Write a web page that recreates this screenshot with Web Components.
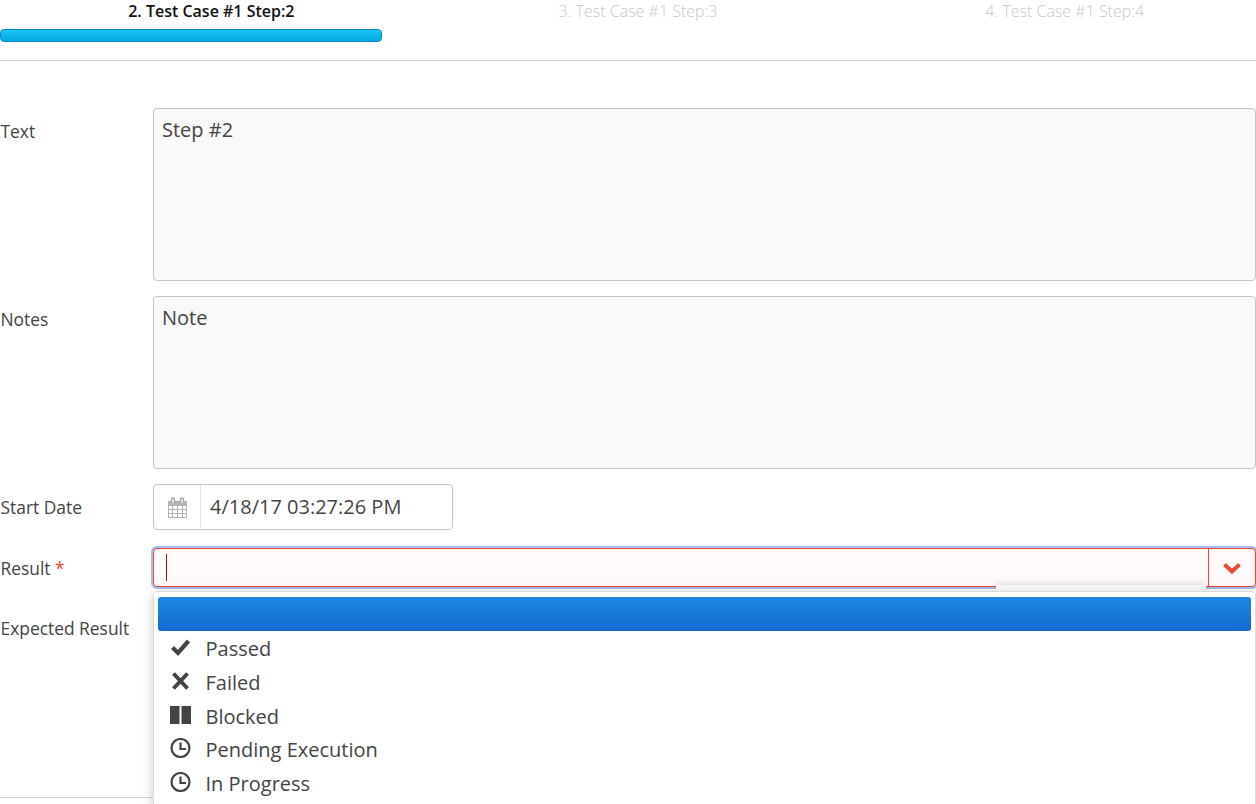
<!DOCTYPE html>
<html>
<head>
<meta charset="utf-8">
<title>Test Case Step</title>
<style>
    html, body{
        margin: 0;
        height: 804px;
        overflow: hidden;
        background-color: #fff;
        font-family: "Open Sans", sans-serif;
        color: #444;
    }
</style>
</head>
<body>
<step-header></step-header>
<form-row label="Text"><text-box>Step #2</text-box></form-row>
<form-row label="Notes"><text-box>Note</text-box></form-row>
<form-row label="Start Date"><date-field value="4/18/17 03:27:26 PM"></date-field></form-row>
<form-row label="Result" required style="--label-top:10px"><result-select></result-select></form-row>
<form-row label="Expected Result" last style="--label-top:15px"></form-row>

<script>
class StepHeader extends HTMLElement {
    constructor(){
        super();
        this.attachShadow({mode:'open'});
        this.shadowRoot.innerHTML = `
            <style>
                :host{
                    display: block;
                    height: 60px;
                    border-bottom: 1px solid #d4d4d4;
                    margin-bottom: 47px;
                }
                .steps{
                    display: grid;
                    grid-template-columns: repeat(3, 426.7px);
                    margin-left: -2px;
                }
                .step{
                    font-size: 16px;
                    line-height: 22px;
                    text-align: center;
                    font-weight: 300;
                    color: #c8c8c8;
                }
                .active{
                    color: #111;
                    font-weight: 600;
                }
                .bar{
                    width: 382px;
                    height: 13px;
                    margin-top: 7px;
                    box-sizing: border-box;
                    border: 1px solid #0a85c2;
                    border-radius: 4px;
                    background: linear-gradient(#1bc6f5, #04a8e0);
                }
            </style>
            <div class="steps">
                <div class="step active">2. Test Case #1 Step:2</div>
                <div class="step">3. Test Case #1 Step:3</div>
                <div class="step">4. Test Case #1 Step:4</div>
            </div>
            <div class="bar"></div>
        `;
    }
}

class FormRow extends HTMLElement {
    constructor(){
        super();
        this.attachShadow({mode:'open'});
        this.shadowRoot.innerHTML = `
            <style>
                :host{
                    display: grid;
                    grid-template-columns: 153px 1103px;
                    margin-bottom: 15px;
                }
                :host([last]){
                    height: 195px;
                    border-bottom: 1px solid #d4d4d4;
                }
                .label{
                    padding: var(--label-top, 12px) 0 0 0.5px;
                    font-size: 17.4px;
                    line-height: 22px;
                    color: #444;
                }
                .req{
                    color: #f44336;
                }
            </style>
            <div class="label"></div>
            <div><slot></slot></div>
        `;
    }

    connectedCallback(){
        const label = this.shadowRoot.querySelector('.label');
        label.textContent = this.getAttribute('label');
        if(this.hasAttribute('required')){
            label.innerHTML += ' <span class="req">*</span>';
        }
    }
}

class TextBox extends HTMLElement {
    constructor(){
        super();
        this.attachShadow({mode:'open'});
        this.shadowRoot.innerHTML = `
            <style>
                :host{
                    display: block;
                    height: 173px;
                    box-sizing: border-box;
                    padding: 6px 8px;
                    border: 1px solid #c4c4c4;
                    border-radius: 4px;
                    background-color: #f9f9f9;
                    font-size: 20px;
                    line-height: 29px;
                    color: #444;
                }
            </style>
            <slot></slot>
        `;
    }
}

class DateField extends HTMLElement {
    constructor(){
        super();
        this.attachShadow({mode:'open'});
        this.shadowRoot.innerHTML = `
            <style>
                :host{
                    display: flex;
                    width: 300px;
                    height: 46px;
                    box-sizing: border-box;
                    border: 1px solid #c4c4c4;
                    border-radius: 4px;
                    margin-bottom: 2px;
                    background-color: #fff;
                }
                .icon{
                    display: flex;
                    width: 46px;
                    align-items: center;
                    justify-content: center;
                    border-right: 1px solid #e4e4e4;
                }
                .value{
                    padding-left: 9px;
                    font-size: 20px;
                    line-height: 44px;
                    color: #444;
                }
            </style>
            <div class="icon">
                <svg width="19" height="21" viewBox="0 0 19 21">
                    <path d="M0 4h19v7H0z" fill="#b4b4b4"/>
                    <path d="M0.500 8.500h18v12h-18zM0.500 12.500h18M0.500 16.500h18M4.500 8.500v12M9.500 8.500v12M14.500 8.500v12" stroke="#b4b4b4" fill="#fff"/>
                    <path d="M3.500 6V2.500a1.500 1.500 0 0 1 3 0V6M12.500 6V2.500a1.500 1.500 0 0 1 3 0V6" stroke="#a6a6a6" stroke-width="1.400" fill="#f0f0f0"/>
                </svg>
            </div>
            <div class="value"></div>
        `;
    }

    connectedCallback(){
        this.shadowRoot.querySelector('.value').textContent = this.getAttribute('value');
    }
}

class ResultSelect extends HTMLElement {
    constructor(){
        super();
        this.attachShadow({mode:'open'});
        this.shadowRoot.innerHTML = `
            <style>
                :host{
                    display: block;
                    position: relative;
                    height: 39px;
                    margin-top: 1px;
                }
                .box{
                    display: flex;
                    height: 39px;
                    box-sizing: border-box;
                    border: 1px solid #f44336;
                    border-radius: 4px;
                    background-color: #fffafa;
                    box-shadow: 0 0 0 2px #9cc4ee;
                }
                .input{
                    flex: 1;
                    position: relative;
                }
                .caret{
                    position: absolute;
                    left: 12px;
                    top: 5px;
                    width: 1px;
                    height: 27px;
                    background-color: #7a1a12;
                }
                .arrow{
                    display: flex;
                    width: 47px;
                    box-sizing: border-box;
                    align-items: center;
                    justify-content: center;
                    border-left: 1px solid #f44336;
                }
                .strip{
                    position: absolute;
                    left: 843px;
                    top: 37px;
                    width: 210px;
                    height: 6px;
                    background-color: #fdfdfd;
                    box-shadow: 0 -2px 6px rgba(0,0,0,.12);
                }
                .menu{
                    position: absolute;
                    left: 0;
                    top: 43px;
                    width: 1103px;
                    height: 240px;
                    box-sizing: border-box;
                    padding: 5px 4px 0;
                    border: 1px solid #dcdcdc;
                    border-radius: 4px;
                    background-color: #fff;
                    box-shadow: 0 2px 12px rgba(0,0,0,.2);
                }
                .selected{
                    height: 34px;
                    margin-bottom: 1px;
                    border-radius: 3px;
                    background: linear-gradient(#1c88e3, #1569d0);
                }
            </style>
            <div class="box">
                <div class="input"><span class="caret"></span></div>
                <div class="arrow">
                    <svg width="18" height="12" viewBox="0 0 18 12">
                        <path d="M1.500 2.500l7.500 7 7.500-7" stroke="#f44336" stroke-width="3.800" fill="none"/>
                    </svg>
                </div>
            </div>
            <div class="strip"></div>
            <div class="menu">
                <div class="selected"></div>
                <menu-option label="Passed">
                    <svg slot="icon" width="21" height="20" viewBox="0 0 21 20">
                        <path d="M2.500 10.500l5.500 5.500L18.500 4" stroke="#444" stroke-width="4.200" fill="none"/>
                    </svg>
                </menu-option>
                <menu-option label="Failed">
                    <svg slot="icon" width="21" height="20" viewBox="0 0 21 20">
                        <path d="M3.500 2.500l14 15M17.500 2.500l-14 15" stroke="#444" stroke-width="4" fill="none"/>
                    </svg>
                </menu-option>
                <menu-option label="Blocked">
                    <svg slot="icon" width="21" height="20" viewBox="0 0 21 20">
                        <path d="M0 1h9.500v18H0zM11.500 1H21v18h-9.500z" fill="#444"/>
                    </svg>
                </menu-option>
                <menu-option label="Pending Execution">
                    <svg slot="icon" width="21" height="20" viewBox="0 0 21 20">
                        <circle cx="10.500" cy="10" r="9" stroke="#444" stroke-width="2.200" fill="none"/>
                        <path d="M10.500 4.500v6.500h5.500" stroke="#444" stroke-width="2.200" fill="none"/>
                    </svg>
                </menu-option>
                <menu-option label="In Progress">
                    <svg slot="icon" width="21" height="20" viewBox="0 0 21 20">
                        <circle cx="10.500" cy="10" r="9" stroke="#444" stroke-width="2.200" fill="none"/>
                        <path d="M10.500 4.500v6.500h5.500" stroke="#444" stroke-width="2.200" fill="none"/>
                    </svg>
                </menu-option>
            </div>
        `;
    }
}

class MenuOption extends HTMLElement {
    constructor(){
        super();
        this.attachShadow({mode:'open'});
        this.shadowRoot.innerHTML = `
            <style>
                :host{
                    display: flex;
                    height: 33.700px;
                    padding-left: 12px;
                    align-items: center;
                    font-size: 20px;
                    color: #444;
                }
                .icon{
                    display: flex;
                    width: 35.500px;
                    margin-top: -3px;
                }
            </style>
            <div class="icon"><slot name="icon"></slot></div>
            <div class="text"></div>
        `;
    }

    connectedCallback(){
        this.shadowRoot.querySelector('.text').textContent = this.getAttribute('label');
    }
}

customElements.define('step-header', StepHeader);
customElements.define('form-row', FormRow);
customElements.define('text-box', TextBox);
customElements.define('date-field', DateField);
customElements.define('result-select', ResultSelect);
customElements.define('menu-option', MenuOption);
</script>
</body>
</html>
